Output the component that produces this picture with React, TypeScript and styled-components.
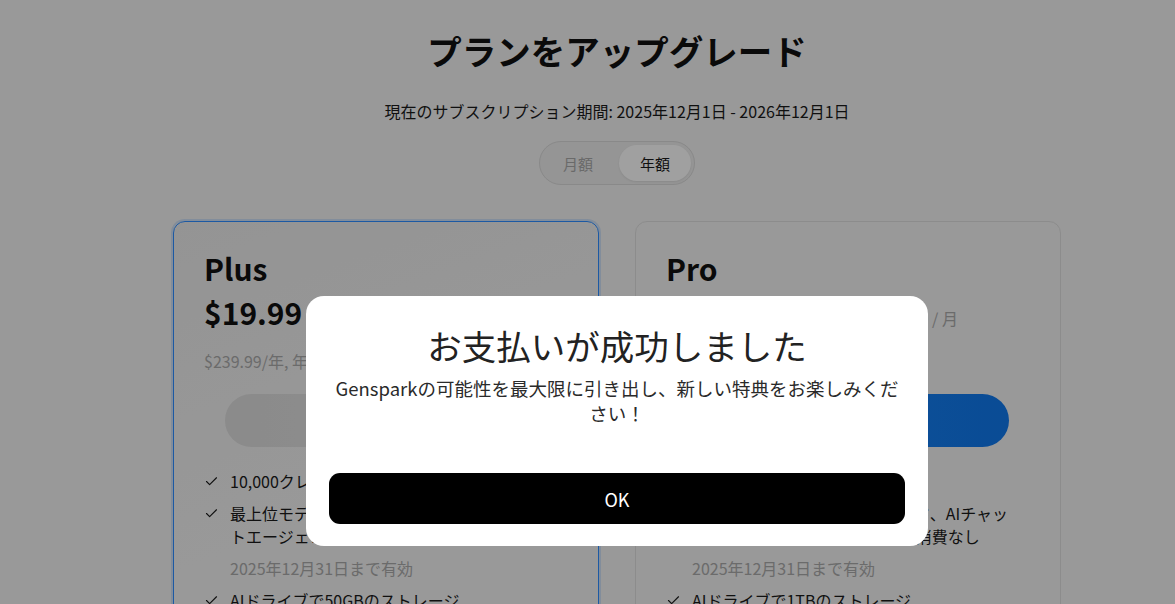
import React from "react";
import styled, { createGlobalStyle } from "styled-components";
import { Check } from "lucide-react";

const GlobalStyle = createGlobalStyle`
  html, body {
    margin: 0;
    padding: 0;
    height: 100%;
    overflow: hidden;
    background: #efefef;
    font-family: "Noto Sans CJK JP", "Noto Sans", sans-serif;
    color: #1a1a1a;
  }
  * { box-sizing: border-box; }
`;

const Shell = styled.div`
  display: flex;
  min-height: 100vh;
`;

const Sidebar = styled.aside`
  width: 59px;
  flex-shrink: 0;
`;

const Main = styled.main`
  flex: 1;
  display: flex;
  flex-direction: column;
  align-items: center;
  padding-top: 28px;
`;

const Title = styled.h1`
  margin: 0;
  font-size: 34.5px;
  line-height: 44px;
  font-weight: 700;
  color: #111;
`;

const Subtitle = styled.p`
  margin: 27px 0 0;
  font-size: 16px;
  line-height: 24px;
  color: #1a1a1a;
`;

const Toggle = styled.div`
  margin-top: 18px;
  display: flex;
  padding: 3px;
  border: 1px solid #d6d6d6;
  border-radius: 22px;
  background: #e9e9e9;
`;

const ToggleOption = styled.button<{ $active?: boolean }>`
  width: ${(p) => (p.$active ? "72px" : "76px")};
  height: 36px;
  border: none;
  border-radius: 18px;
  font-family: inherit;
  font-size: 15px;
  color: ${(p) => (p.$active ? "#1a1a1a" : "#a6a6a6")};
  background: ${(p) => (p.$active ? "#fbfbfb" : "transparent")};
  box-shadow: ${(p) => (p.$active ? "0 1px 2px rgba(0,0,0,0.08)" : "none")};
  padding: ${(p) => (p.$active ? "0" : "0 6px 0 0")};
`;

const CardRow = styled.div`
  margin-top: 36px;
  display: flex;
  gap: 36px;
`;

const Card = styled.section<{ $highlight?: boolean }>`
  width: 426px;
  border-radius: 12px;
  border: 1px solid ${(p) => (p.$highlight ? "#2d8cff" : "#dcdcdc")};
  box-shadow: ${(p) => (p.$highlight ? "0 0 0 2px rgba(45,140,255,0.18)" : "none")};
  background: ${(p) =>
    p.$highlight ? "linear-gradient(160deg, #e8e8e8 0%, #efefef 60%)" : "#efefef"};
  padding: 28px 30px 40px;
  display: flex;
  flex-direction: column;
`;

const PlanName = styled.h2`
  margin: 0;
  font-size: 30px;
  line-height: 36px;
  font-weight: 700;
  color: #111;
`;

const PriceRow = styled.div`
  margin-top: 8px;
  display: flex;
  align-items: baseline;
  gap: 6px;
`;

const Price = styled.span`
  font-size: 30px;
  line-height: 36px;
  font-weight: 700;
  color: #111;
`;

const OldPrice = styled.span`
  font-size: 24px;
  color: #a8a8a8;
  text-decoration: line-through;
`;

const Per = styled.span<{ $offset: number }>`
  margin-left: ${(p) => p.$offset}px;
  font-size: 16px;
  color: #a8a8a8;
`;

const Yearly = styled.p`
  margin: 18px 0 0;
  font-size: 16px;
  line-height: 22px;
  color: #a8a8a8;
`;

const PlanButton = styled.button<{ $primary?: boolean }>`
  margin: 22px 21px 0;
  height: 53px;
  border: none;
  border-radius: 27px;
  font-family: inherit;
  font-size: 16px;
  font-weight: 600;
  color: ${(p) => (p.$primary ? "#fff" : "#a0a0a0")};
  background: ${(p) =>
    p.$primary
      ? "linear-gradient(90deg, #1a84f2 0%, #1077ea 100%)"
      : "linear-gradient(90deg, #d9d9d9 0%, #e2e2e2 100%)"};
`;

const Features = styled.ul`
  list-style: none;
  margin: 23px 0 0;
  padding: 0 14px 0 0;
  display: flex;
  flex-direction: column;
  gap: 9px;
`;

const Feature = styled.li`
  display: flex;
  align-items: flex-start;
  gap: 11px;
  font-size: 16px;
  line-height: 23px;
  color: #1a1a1a;

  svg {
    flex-shrink: 0;
    margin-top: 4px;
  }
`;

const Note = styled.li`
  padding-left: 26px;
  font-size: 16px;
  line-height: 23px;
  color: #a8a8a8;
`;

const Overlay = styled.div`
  position: fixed;
  inset: 0;
  background: rgba(0, 0, 0, 0.36);
  display: flex;
  justify-content: center;
  align-items: flex-start;
  padding: 296px 0 0 59px;
`;

const Modal = styled.div`
  width: 622px;
  background: #fff;
  border-radius: 18px;
  padding: 28px 23px 22px;
  display: flex;
  flex-direction: column;
  align-items: stretch;
  text-align: center;
`;

const ModalTitle = styled.h3`
  margin: 0;
  font-size: 34.5px;
  line-height: 42px;
  font-weight: 400;
  color: #222;
`;

const ModalText = styled.p`
  margin: 10px 0 0;
  font-size: 18.5px;
  line-height: 25px;
  color: #2a2a2a;
`;

const OkButton = styled.button`
  margin-top: 47px;
  height: 51px;
  border: none;
  border-radius: 11px;
  background: #000;
  color: #fff;
  font-family: inherit;
  font-size: 18px;
`;

type Plan = {
  name: string;
  price: string;
  oldPrice: string;
  perOffset: number;
  yearly: string;
  button: string;
  primary?: boolean;
  highlight?: boolean;
  credits: string;
  storage: string;
};

const plans: Plan[] = [
  {
    name: "Plus",
    price: "$19.99",
    oldPrice: "$24.99",
    perOffset: 16,
    yearly: "$239.99/年, 年間請求",
    button: "現在のプラン",
    highlight: true,
    credits: "10,000クレジット/月",
    storage: "AIドライブで50GBのストレージ",
  },
  {
    name: "Pro",
    price: "$199.99",
    oldPrice: "$249.99",
    perOffset: 16,
    yearly: "$2,399.99/年, 年間請求",
    button: "アップグレード",
    primary: true,
    credits: "125,000クレジット/月",
    storage: "AIドライブで1TBのストレージ",
  },
];

const PlanCard = ({ plan }: { plan: Plan }) => (
  <Card $highlight={plan.highlight}>
    <PlanName>{plan.name}</PlanName>
    <PriceRow>
      <Price>{plan.price}</Price>
      <OldPrice>{plan.oldPrice}</OldPrice>
      <Per $offset={plan.perOffset}>USD / 月</Per>
    </PriceRow>
    <Yearly>{plan.yearly}</Yearly>
    <PlanButton $primary={plan.primary}>{plan.button}</PlanButton>
    <Features>
      <Feature>
        <Check size={15} strokeWidth={1.8} />
        <span>{plan.credits}</span>
      </Feature>
      <Feature>
        <Check size={15} strokeWidth={1.8} />
        <span>最上位モデルを使ったAIスライド、AIチャットエージェントでのクレジット消費なし</span>
      </Feature>
      <Note>2025年12月31日まで有効</Note>
      <Feature>
        <Check size={15} strokeWidth={1.8} />
        <span>{plan.storage}</span>
      </Feature>
    </Features>
  </Card>
);

export default function App() {
  return (
    <>
      <GlobalStyle />
      <Shell>
        <Sidebar />
        <Main>
          <Title>プランをアップグレード</Title>
          <Subtitle>現在のサブスクリプション期間: 2025年12月1日 - 2026年12月1日</Subtitle>
          <Toggle>
            <ToggleOption>月額</ToggleOption>
            <ToggleOption $active>年額</ToggleOption>
          </Toggle>
          <CardRow>
            {plans.map((p) => (
              <PlanCard key={p.name} plan={p} />
            ))}
          </CardRow>
        </Main>
        <Overlay>
          <Modal>
            <ModalTitle>お支払いが成功しました</ModalTitle>
            <ModalText>
              Gensparkの可能性を最大限に引き出し、新しい特典をお楽しみください！
            </ModalText>
            <OkButton>OK</OkButton>
          </Modal>
        </Overlay>
      </Shell>
    </>
  );
}
